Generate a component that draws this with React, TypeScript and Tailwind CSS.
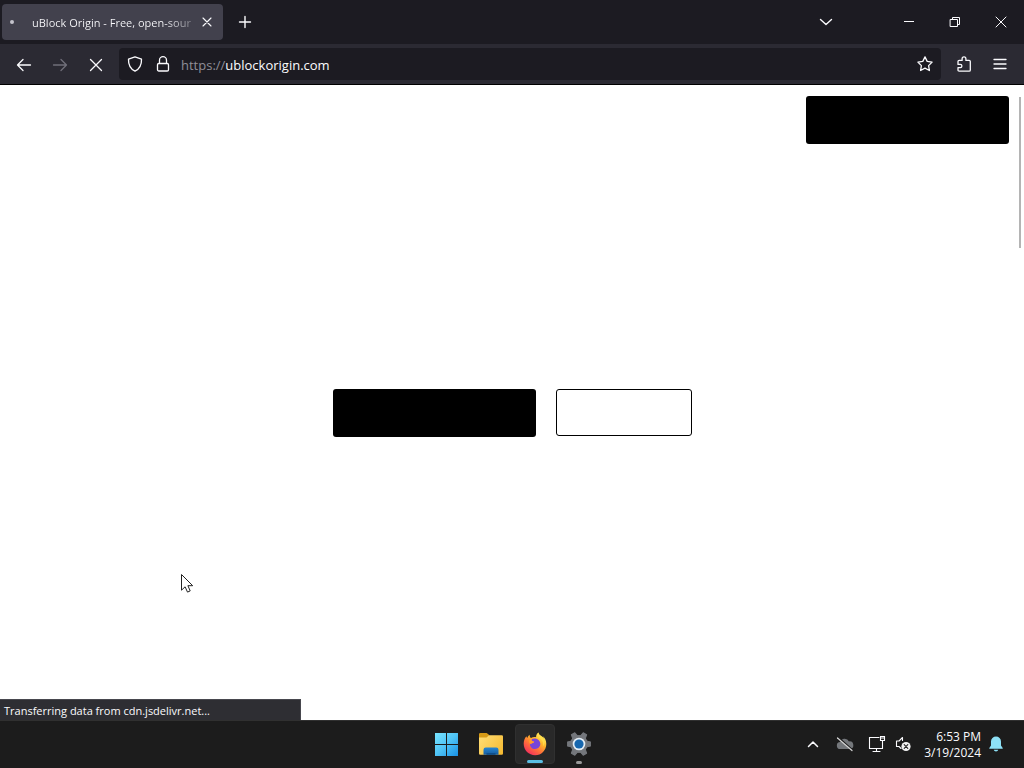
import React from "react";

type IconProps = { children: React.ReactNode; className?: string; box?: string };

function Icon({ children, className = "size-4", box = "0 0 16 16" }: IconProps) {
  return (
    <svg
      viewBox={box}
      className={className}
      fill="none"
      stroke="currentColor"
      strokeWidth="1.3"
      strokeLinecap="round"
      strokeLinejoin="round"
      aria-hidden="true"
    >
      {children}
    </svg>
  );
}

type ButtonProps = { label: string; className: string; children?: React.ReactNode };

function IconButton({ label, className, children }: ButtonProps) {
  return (
    <button type="button" aria-label={label} className={`flex shrink-0 items-center justify-center ${className}`}>
      {children}
    </button>
  );
}

function TitleBar() {
  return (
    <header className="flex h-11 items-center bg-[#1c1b22] pl-0.5">
      <div className="flex h-9 w-[221px] items-center rounded bg-[#42414d] pr-1.5">
        <span className="ml-2 size-1 rounded-full bg-[#c4c3cc]" />
        <span className="ml-[18px] flex-1 overflow-hidden whitespace-nowrap bg-gradient-to-r from-[#fbfbfe] from-80% to-[#fbfbfe]/20 bg-clip-text pt-0.5 text-[11px] text-transparent">
          uBlock Origin - Free, open-sour
        </span>
        <IconButton label="Close tab" className="w-5 h-6">
          <Icon className="size-3" box="0 0 12 12">
            <path d="M2 2l8 8M10 2l-8 8" strokeWidth="1.1" />
          </Icon>
        </IconButton>
      </div>
      <IconButton label="New tab" className="ml-1 size-9">
        <Icon>
          <path d="M8 2.500v11M2.500 8h11" strokeWidth="1.4" />
        </Icon>
      </IconButton>
      <IconButton label="List all tabs" className="mr-[42px] ml-auto size-9">
        <Icon>
          <path d="M2.500 5.500L8 10.500l5.500-5" strokeWidth="1.4" />
        </Icon>
      </IconButton>
      <IconButton label="Minimize" className="h-11 w-[46px]">
        <Icon className="size-3" box="0 0 12 12">
          <path d="M1 5.500h10" strokeWidth="1" strokeLinecap="butt" />
        </Icon>
      </IconButton>
      <IconButton label="Restore" className="h-11 w-[46px]">
        <Icon className="size-3" box="0 0 12 12">
          <path d="M1.500 3.500h7v7h-7zM3.500 3.500v-2h7v7h-2" strokeWidth="1" strokeLinejoin="miter" />
        </Icon>
      </IconButton>
      <IconButton label="Close window" className="h-11 w-[46px]">
        <Icon className="size-3" box="0 0 12 12">
          <path d="M1 1l10 10M11 1L1 11" strokeWidth="1" />
        </Icon>
      </IconButton>
    </header>
  );
}

function NavBar() {
  return (
    <nav className="flex h-[41px] items-center border-b border-black bg-[#2b2a33] px-2">
      <div className="flex gap-1 pt-0.5">
        <IconButton label="Back" className="size-8">
          <Icon>
            <path d="M14.500 8h-13M7 2.500L1.500 8 7 13.500" />
          </Icon>
        </IconButton>
        <IconButton label="Forward" className="size-8 text-[#706f7a]">
          <Icon>
            <path d="M1.500 8h13M9 2.500L14.500 8 9 13.500" />
          </Icon>
        </IconButton>
        <IconButton label="Stop" className="size-8">
          <Icon>
            <path d="M2.500 2.500l11 11M13.500 2.500l-11 11" />
          </Icon>
        </IconButton>
      </div>
      <div className="mr-[7px] ml-[7px] flex h-8 flex-1 items-center rounded-sm bg-[#1c1b22] pl-0.5">
        <IconButton label="Tracking protection" className="size-7">
          <Icon>
            <path d="M8 .8l6.500 2.400c.200 5-1.300 9.300-6.500 12C2.800 12.500 1.300 8.200 1.500 3.200z" />
          </Icon>
        </IconButton>
        <IconButton label="Site information" className="size-7">
          <Icon>
            <path d="M4.500 7V4.200a3.500 3.500 0 017 0V7" />
            <rect x="2.500" y="7.500" width="11" height="7.500" rx="1.300" />
          </Icon>
        </IconButton>
        <div className="relative ml-1 h-[22px] flex-1 text-[13px] leading-6">
          <div aria-hidden="true" className="pointer-events-none absolute inset-0 whitespace-nowrap">
            <span className="text-[#8f8e98]">https://</span>
            <span>ublockorigin.com</span>
          </div>
          <input
            aria-label="Address"
            defaultValue="https://ublockorigin.com"
            className="h-[22px] w-full bg-transparent text-transparent outline-none"
          />
        </div>
        <IconButton label="Bookmark this page" className="size-8">
          <Icon>
            <path d="M8 .9l2.200 4.500 4.900.7-3.500 3.500.8 4.900L8 12.200l-4.400 2.300.8-4.900L.9 6.100l4.900-.7z" />
          </Icon>
        </IconButton>
      </div>
      <div className="flex gap-1">
        <IconButton label="Extensions" className="size-8">
          <Icon>
            <path d="M2 6.200V5.600q0-1.200 1.200-1.200h2.900V2.700a1.900 1.900 0 013.800 0v1.700h3.200q1.200 0 1.200 1.200v8.400q0 1.200-1.200 1.200H3.200Q2 15.200 2 14v-2.400h2.300a1.600 1.600 0 000-3.200H2z" />
          </Icon>
        </IconButton>
        <IconButton label="Open application menu" className="size-8">
          <Icon>
            <path d="M2 3.500h12M2 8h12M2 12.500h12" strokeWidth="1.300" />
          </Icon>
        </IconButton>
      </div>
    </nav>
  );
}

function Page() {
  return (
    <main className="relative flex flex-1 flex-col bg-white pt-[11px]">
      <div className="flex justify-end pr-[15px]">
        <button type="button" aria-label="Get uBlock Origin" className="h-12 w-[203px] rounded-[3px] bg-black" />
      </div>
      <section className="flex flex-1 items-center justify-center pb-[38px]">
        <div className="flex items-start gap-5">
          <button type="button" aria-label="Install" className="h-12 w-[203px] rounded-[3px] bg-black" />
          <button type="button" aria-label="Read more" className="h-[47px] w-[136px] rounded-[3px] border border-black bg-white" />
        </div>
      </section>
      <div className="absolute top-3 right-[3px] h-[151px] w-0.5 bg-[#b4b4b4]" />
      <div className="absolute bottom-0 left-0 h-[21px] w-[301px] border-t border-r border-[#47474e] bg-[#2e2e33] pl-1 text-[11px] leading-[22px]">
        Transferring data from cdn.jsdelivr.net...
      </div>
      <svg viewBox="0 0 14 22" className="absolute top-[488px] left-[180px] h-[22px] w-3.5" aria-hidden="true">
        <path
          d="M1.500 1.500v15.700l3.600-3.400 2.400 5.300 2.700-1.200-2.300-5.200h4.800z"
          fill="#fff"
          stroke="#222"
          strokeWidth="1"
          strokeLinejoin="round"
        />
      </svg>
    </main>
  );
}

function WindowsLogo() {
  return (
    <svg viewBox="0 0 24 24" className="size-6" aria-hidden="true">
      <defs>
        <linearGradient id="win" x1="0" y1="0" x2="24" y2="24" gradientUnits="userSpaceOnUse">
          <stop offset="0" stopColor="#7ae6ff" />
          <stop offset=".5" stopColor="#4fc3f5" />
          <stop offset="1" stopColor="#168fe5" />
        </linearGradient>
      </defs>
      <path d="M0 1h11v11H0zM12 1h11v11H12zM0 13h11v11H0zM12 13h11v11H12z" fill="url(#win)" />
    </svg>
  );
}

function FolderIcon() {
  return (
    <svg viewBox="0 0 26 24" className="h-6 w-[26px]" aria-hidden="true">
      <defs>
        <linearGradient id="folder" x1="0" y1="3" x2="26" y2="22" gradientUnits="userSpaceOnUse">
          <stop offset="0" stopColor="#ffe07a" />
          <stop offset="1" stopColor="#f5b82e" />
        </linearGradient>
        <linearGradient id="tray" x1="0" y1="16" x2="0" y2="23" gradientUnits="userSpaceOnUse">
          <stop offset="0" stopColor="#2583cf" />
          <stop offset="1" stopColor="#145a9c" />
        </linearGradient>
      </defs>
      <path d="M1 8V2.200Q1 1 2.200 1h6.500l2.500 2v5z" fill="#d69a16" />
      <path d="M1 5.500h7.500L11 3.200h12.800Q25 3.200 25 4.400v17.200q0 1.200-1.200 1.200H2.200Q1 22.800 1 21.600z" fill="url(#folder)" />
      <path d="M5.500 22.800v-5q0-2.200 2.200-2.200h10.600q2.200 0 2.200 2.200v5z" fill="url(#tray)" />
      <path d="M8.500 22.800v-1.600h9v1.600z" fill="#0d4a86" />
    </svg>
  );
}

function FirefoxIcon() {
  return (
    <svg viewBox="0 0 24 24" className="size-6" aria-hidden="true">
      <defs>
        <linearGradient id="fox" x1="19" y1="2" x2="5" y2="21" gradientUnits="userSpaceOnUse">
          <stop offset="0" stopColor="#fff36a" />
          <stop offset=".35" stopColor="#ffb52a" />
          <stop offset=".65" stopColor="#ff7139" />
          <stop offset="1" stopColor="#f5325b" />
        </linearGradient>
      </defs>
      <path
        d="M15.500.5c-2 1.400-2.500 3.200-2.400 4.700-1.900-.4-3.800 0-5.100.9C7 5.500 6.600 4.300 6.700 2.700 5.400 3.500 4.600 4.900 4.300 6 3.800 5.600 3.500 5 3.500 4.200 1.500 6.100.7 8.900.7 11.700c0 6.400 5.100 11.500 11.400 11.500s11.200-5 11.200-11.300c0-3.500-1.300-6.100-3.300-7.700.4.900.6 1.700.6 2.500C18.900 4 15.500 3.900 15.500.5z"
        fill="url(#fox)"
      />
      <path d="M8.700 7.300c2.600-1.900 8.200-.5 8.600 4.300.2 3.200-2.300 5.400-5.200 5.400-3.200 0-5.200-2.400-5.100-4.800 1.400-1 2.800-.7 4.200-1.700-1.300-.8-2.700-1.400-2.500-3.200z" fill="#7745d8" />
      <path d="M6.900 11.400c-1.700-1.400-1-3.600.9-3.900.3 1.300 1.500 1.900 3.500 2.100-.2 1-1.700 1.100-2.400 1.600-.6.600-1.300.8-2 .2z" fill="#ff9a2c" />
      <path d="M17.500 6.800c2.300 1.500 3.500 4.500 2.200 7.800 3.200-3.400 2.100-8.200-.6-10.100-2.100-1.500-3.400-2-3.600-4-1.600 2.300-1.100 4.700 2 6.300z" fill="#ffdc4b" />
    </svg>
  );
}

const TEETH = [0, 60, 120, 180, 240, 300];

function GearIcon() {
  return (
    <svg viewBox="0 0 24 24" className="size-6" aria-hidden="true">
      <g fill="#74777c">
        {TEETH.map((angle) => (
          <path key={angle} d="M-2.800-7.500l.8-4.300h4l.8 4.300z" transform={`translate(12 12) rotate(${angle + 30})`} stroke="#74777c" strokeLinejoin="round" />
        ))}
        <circle cx="12" cy="12" r="9" />
      </g>
      <circle cx="12" cy="12" r="6.300" fill="#e5eef5" />
      <circle cx="12" cy="12" r="4.600" fill="#1767ae" />
    </svg>
  );
}

function TrayIcons() {
  return (
    <>
      <IconButton label="Show hidden icons" className="h-8 w-6">
        <Icon className="size-3" box="0 0 12 12">
          <path d="M1.500 8.500L6 4l4.500 4.500" strokeWidth="1.500" />
        </Icon>
      </IconButton>
      <IconButton label="OneDrive" className="ml-2 h-8 w-6">
        <Icon className="size-[18px]" box="0 0 18 18">
          <path d="M4.500 14a3.500 3.500 0 01-.3-7 4.800 4.800 0 018.800-.6A3.800 3.800 0 0114 14z" fill="#74777b" stroke="none" />
          <path d="M3 3.200l13.500 12" stroke="#1c1c1c" strokeWidth="2" />
          <path d="M1.500 3l14.500 12.500" stroke="#d8d8d8" strokeWidth="1.200" />
        </Icon>
      </IconButton>
      <IconButton label="Network" className="ml-2 h-8 w-6">
        <Icon className="size-[18px]" box="0 0 18 18">
          <path d="M11 2.500H1.500v11h13V9M8.500 13.500v3M5 16.500h7" strokeWidth="1.100" strokeLinejoin="miter" />
          <path d="M12.500 1.500h4v4h-4zM14.500 5.500v3.500M12.500 3h4" strokeWidth="1.100" strokeLinejoin="miter" />
        </Icon>
      </IconButton>
      <IconButton label="Volume muted" className="ml-0.5 h-8 w-6">
        <Icon className="size-4" box="0 0 16 16">
          <path d="M7.500 4.500V1.500L4 5H1.500v5.500H4L6 12.500" strokeWidth="1.100" />
          <circle cx="11" cy="10.500" r="4.600" fill="#f2f2f2" stroke="none" />
          <path d="M9.200 8.700l3.600 3.600M12.800 8.700l-3.600 3.600" stroke="#222" strokeWidth="1.100" />
        </Icon>
      </IconButton>
    </>
  );
}

function Taskbar() {
  return (
    <footer className="grid h-12 grid-cols-[1fr_auto_1fr] items-center border-t border-[#303030] bg-[#1c1c1c] pb-0.5">
      <div className="col-start-2 flex gap-1 pl-0.5">
        <IconButton label="Start" className="size-10">
          <WindowsLogo />
        </IconButton>
        <IconButton label="File Explorer" className="size-10">
          <FolderIcon />
        </IconButton>
        <IconButton label="Firefox" className="relative size-10 rounded border border-[#303030] bg-[#292929]">
          <FirefoxIcon />
          <span className="absolute bottom-0 h-[3px] w-4 rounded-full bg-[#5bbfe4]" />
        </IconButton>
        <IconButton label="Settings" className="relative size-10">
          <GearIcon />
          <span className="absolute bottom-0 h-[3px] w-1.5 rounded-full bg-[#999999]" />
        </IconButton>
      </div>
      <div className="flex items-center justify-end pr-5">
        <TrayIcons />
        <time dateTime="2024-03-19T18:53" className="ml-2 w-[58px] pt-0.5 text-right text-[12px] leading-4 whitespace-nowrap">
          6:53 PM
          <br />
          3/19/2024
        </time>
        <svg viewBox="0 0 16 16" className="ml-[7px] size-4 text-[#8de0f5]" aria-label="Notifications" role="img">
          <path d="M8 .5a5 5 0 00-5 5v4L1.300 12v.8h13.400V12L13 9.500v-4a5 5 0 00-5-5zM5.700 13.700a2.400 2.400 0 004.600 0z" fill="currentColor" />
        </svg>
      </div>
    </footer>
  );
}

export default function App() {
  return (
    <div className="flex min-h-screen flex-col font-['Open_Sans','Noto_Sans',sans-serif] text-[#fbfbfe]">
      <TitleBar />
      <NavBar />
      <Page />
      <Taskbar />
    </div>
  );
}
